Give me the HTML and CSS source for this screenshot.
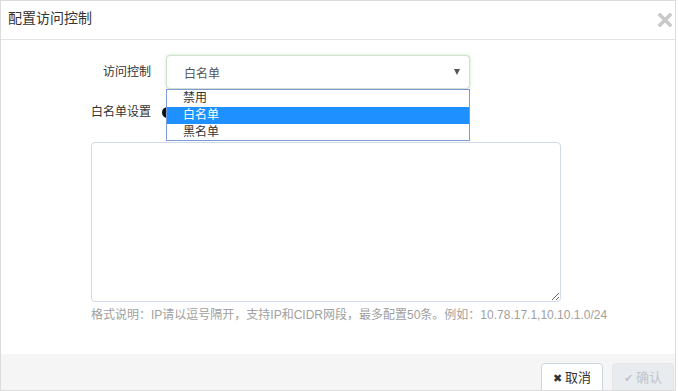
FILE: index.html
```html
<!DOCTYPE html>
<html lang="zh-CN">
<head>
<meta charset="utf-8">
<title>配置访问控制</title>
<link rel="stylesheet" href="styles.css">
</head>
<body>
<div class="modal">
  <div class="modal-header">
    <span class="modal-title">配置访问控制</span>
    <span class="close" aria-label="关闭">
      <svg width="14" height="14" viewBox="0 0 14 14"><path d="M2 2 L12 12 M12 2 L2 12" stroke="#c9c9c9" stroke-width="3.6" stroke-linecap="square"/></svg>
    </span>
  </div>
  <div class="modal-body">
    <div class="row row-select">
      <label class="label">访问控制</label>
      <div class="select-wrap">
        <div class="select">
          <span class="select-text">白名单</span>
          <span class="caret"></span>
        </div>
        <ul class="options">
          <li class="option">禁用</li>
          <li class="option selected">白名单</li>
          <li class="option">黑名单</li>
        </ul>
      </div>
    </div>
    <div class="row row-switch">
      <label class="label">白名单设置</label>
      <span class="switch"><span class="knob"></span></span>
    </div>
    <textarea class="ip-list"></textarea>
    <p class="help">格式说明：IP请以逗号隔开，支持IP和CIDR网段，最多配置50条。例如：10.78.17.1,10.10.1.0/24</p>
  </div>
  <div class="modal-footer">
    <button class="btn btn-cancel"><span class="ico">✖</span>取消</button>
    <button class="btn btn-ok" disabled><span class="ico">✔</span>确认</button>
  </div>
</div>
</body>
</html>
```
FILE: styles.css
```css
* { box-sizing: border-box; }
html, body { margin: 0; padding: 0; background: #fff; }
body {
  font-family: "Liberation Sans", "Noto Sans CJK SC", sans-serif;
  font-size: 12px;
  color: #333;
}
.modal {
  width: 676px;
  height: 391px;
  border: 1px solid #dcdcdc;
  display: flex;
  flex-direction: column;
  overflow: hidden;
}
.modal-header {
  height: 39px;
  flex: none;
  border-bottom: 1px solid #e3e3e3;
  display: flex;
  align-items: flex-start;
  justify-content: space-between;
  padding: 7px 3px 0 7px;
}
.modal-title {
  font-size: 14px;
  line-height: 20px;
  color: #333;
}
.close {
  margin-top: 5px;
  width: 14px;
  height: 14px;
  display: block;
}
.close svg { display: block; }
.modal-body {
  flex: 1 1 auto;
  padding-top: 15px;
}
.row {
  display: flex;
  align-items: center;
}
.label {
  width: 150px;
  text-align: right;
  line-height: 20px;
  color: #333;
}
.select-wrap {
  position: relative;
  margin-left: 15px;
  width: 304px;
}
.select {
  height: 34px;
  border: 1px solid #d4dfcf;
  border-radius: 4px;
  box-shadow: 0 0 3px rgba(120, 200, 110, 0.45);
  display: flex;
  align-items: center;
  justify-content: space-between;
  padding: 0 9px 0 17px;
  color: #555;
  background: #fff;
}
.caret {
  width: 0;
  height: 0;
  border-left: 3.5px solid transparent;
  border-right: 3.5px solid transparent;
  border-top: 6px solid #555;
  margin-top: -1px;
}
.options {
  position: absolute;
  left: 0;
  top: 34px;
  width: 304px;
  margin: 0;
  padding: 0;
  list-style: none;
  border: 1px solid #7c9bd6;
  background: #fff;
  z-index: 2;
}
.option {
  height: 17px;
  line-height: 17px;
  padding-left: 16px;
  color: #333;
}
.option:last-child { height: 16px; }
.option.selected {
  background: #1e90ff;
  color: #fff;
}
.row-switch {
  margin-top: 13px;
}
.switch {
  margin-left: 11px;
  width: 40px;
  height: 12px;
  display: flex;
  align-items: center;
}
.knob {
  width: 11px;
  height: 11px;
  border-radius: 50%;
  background: #111;
}
.ip-list {
  display: block;
  margin: 20px 0 0 90px;
  width: 470px;
  height: 160px;
  border: 1px solid #cfdbe7;
  border-radius: 4px;
  resize: both;
  outline: none;
  font: inherit;
}
.help {
  margin: 5px 0 0 90px;
  line-height: 16px;
  color: #a0a0a0;
  font-size: 12px;
}
.modal-footer {
  flex: none;
  height: 36px;
  background: #f5f5f5;
  display: flex;
  justify-content: flex-end;
  align-items: flex-start;
  gap: 9px;
  padding: 9px 1px 0 0;
}
.btn {
  width: 62px;
  height: 30px;
  flex: none;
  border-radius: 4px;
  font-family: "Liberation Sans", "Noto Sans CJK SC", sans-serif;
  font-size: 13px;
  display: flex;
  align-items: flex-start;
  justify-content: center;
  padding: 5px 0 0 0;
  line-height: 18px;
}
.ico {
  font-size: 11px;
  margin-right: 3px;
}
.btn-cancel {
  background: #fff;
  border: 1px solid #cdd6e0;
  color: #333;
}
.btn-cancel .ico { color: #333; }
.btn-ok {
  background: #e9ecef;
  border: 1px solid #e4e7ea;
  color: #c0c4cc;
}
```
